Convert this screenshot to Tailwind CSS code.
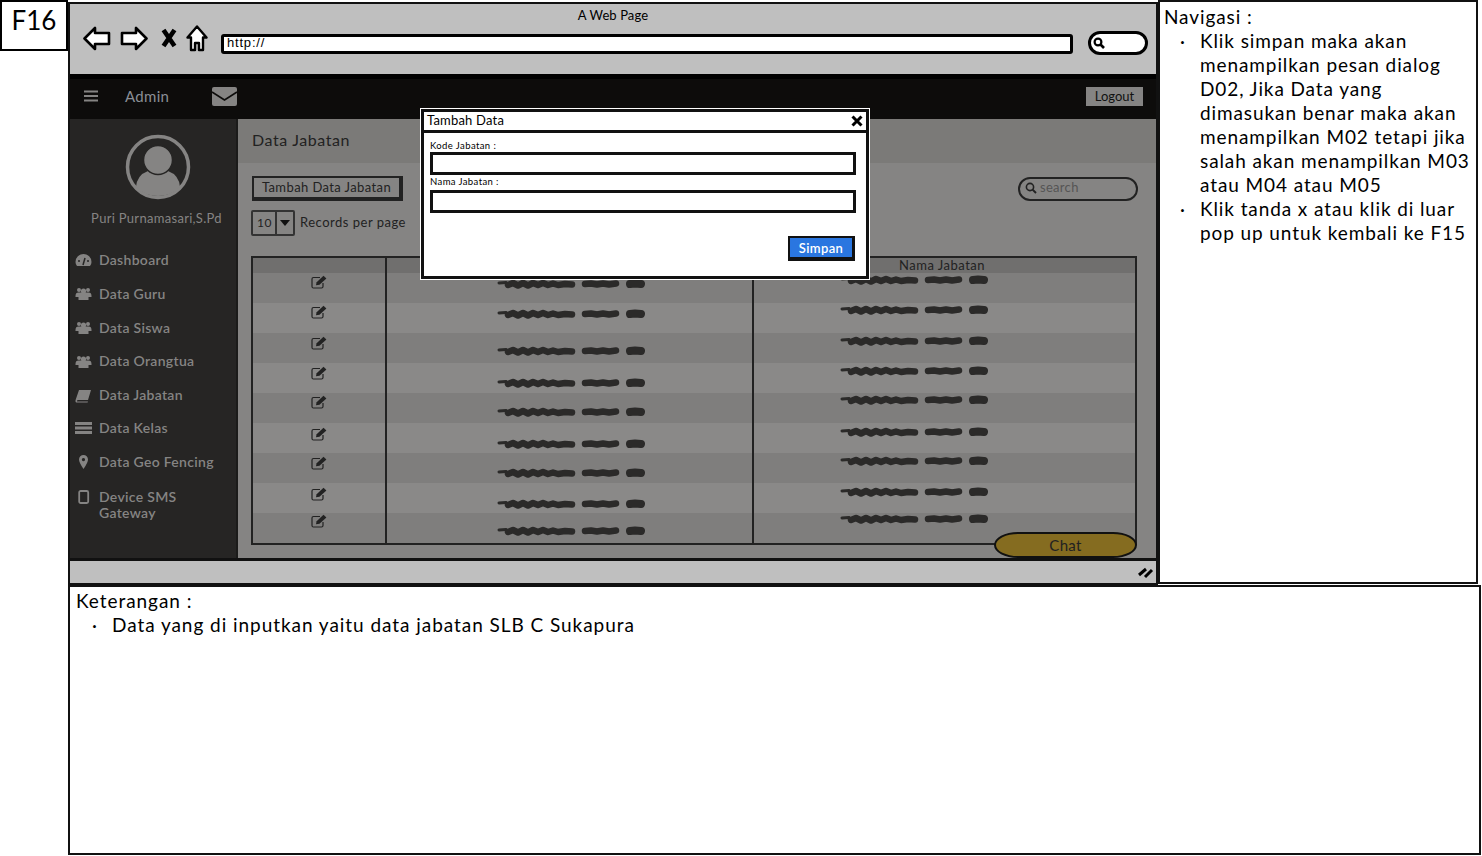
<!DOCTYPE html>
<html lang="en">
<head>
    <meta charset="UTF-8">
    <title>F16 Tambah Data Jabatan</title>
    <script src="https://cdn.jsdelivr.net/npm/@tailwindcss/browser@4"></script>
</head>
<body class="bg-white overflow-hidden font-['Lato',sans-serif] text-black">
<svg class="hidden">
    <symbol id="scribble" viewBox="0 0 148 12">
        <g fill="none" stroke="#2b2a29" stroke-linecap="round" stroke-linejoin="round">
            <path d="M2 5 L9 4.5" stroke-width="3"/>
            <path d="M11 7 L16 5 L21 7.5 L26 5 L31 7.5 L36 5 L41 7 L46 5 L51 7 L56 5.5 L61 7 L68 6 L75 6.5" stroke-width="6.5"/>
            <path d="M88 6 L94 5.5 L100 6.5 L106 5.5 L112 6.5 L119 5.5" stroke-width="6.5"/>
            <path d="M133 6 L138 5.5 L144 6" stroke-width="8"/>
        </g>
    </symbol>
    <symbol id="edit" viewBox="0 0 16 14">
        <path d="M12 8 V11.5 Q12 13 10.5 13 H2.5 Q1 13 1 11.5 V4 Q1 2.5 2.5 2.5 H9" fill="none" stroke="#222" stroke-width="1.2"/>
        <path d="M5 10.2 L5.6 7.2 L12.5 .8 L15.4 3.4 L8.5 9.8 Z" fill="#222"/>
    </symbol>
    <symbol id="users" viewBox="0 0 16 14">
        <circle cx="3.5" cy="3" r="2"/><circle cx="12.5" cy="3" r="2"/><circle cx="8" cy="4" r="2.6"/>
        <path d="M0 9 Q0 5.6 3 5.6 H13 Q16 5.6 16 9 V10 H13 V13 H3 V10 H0 Z"/>
    </symbol>
</svg>

<div class="w-[1482px] h-[856px] flex flex-col">
    <div class="flex h-[585px] shrink-0">
        <!-- screen id -->
        <div class="w-[68px] h-[51px] shrink-0 border-2 border-black bg-white text-[26px] leading-[36px] text-center">F16</div>

        <!-- browser window -->
        <div class="relative w-[1090px] h-[583px] mt-[2px] shrink-0 border-2 border-[#111] flex flex-col">
            <div class="relative h-[70px] shrink-0 bg-[#bfbfbf] flex items-start pl-[13px]">
                <div class="absolute top-[2px] left-0 right-0 text-center text-[13px] leading-[18px] tracking-[0.1px]">A Web Page</div>
                <svg class="w-[28px] h-[25px] mt-[22px]" viewBox="0 0 28 25"><path d="M1.5 12.5 L12 2 V7 H26 V18 H12 V23 Z" fill="#fff" stroke="#000" stroke-width="2.6" stroke-linejoin="round"/></svg>
                <svg class="w-[28px] h-[25px] mt-[22px] ml-[9px]" viewBox="0 0 28 25"><path d="M26.5 12.5 L16 2 V7 H2 V18 H16 V23 Z" fill="#fff" stroke="#000" stroke-width="2.6" stroke-linejoin="round"/></svg>
                <svg class="w-[16px] h-[20px] mt-[24px] ml-[13px]" viewBox="0 0 16 20"><path d="M2.5 2 L13.5 18 M13.5 2 L2.5 18" fill="none" stroke="#000" stroke-width="4.6"/></svg>
                <svg class="w-[22px] h-[27px] mt-[21px] ml-[9px]" viewBox="0 0 22 27"><path d="M11 1.5 L20.5 12.5 H17 V25 H13 V18 H9 V25 H5 V12.5 H1.5 Z" fill="#fff" stroke="#000" stroke-width="2.4" stroke-linejoin="round"/></svg>
                <div class="w-[852px] h-[20px] mt-[30px] ml-[13px] border-[3px] border-black rounded-[3px] bg-white text-[13px] leading-[12px] pl-[3px] tracking-[0.8px] font-['Liberation_Sans',sans-serif]">http://</div>
                <div class="w-[60px] h-[24px] mt-[27px] ml-[15px] border-[3px] border-black rounded-[12px] bg-white flex items-center pl-[2px]">
                    <svg class="w-[12px] h-[12px]" viewBox="0 0 12 12"><circle cx="5" cy="5" r="3.4" fill="none" stroke="#000" stroke-width="2.2"/><path d="M7.5 7.5 L11 11" stroke="#000" stroke-width="2.6"/></svg>
                </div>
            </div>

            <!-- app header -->
            <div class="h-[45px] shrink-0 bg-[#0d0c0b] border-t-[5px] border-black flex items-center pl-[14px] pr-[13px] pb-[6px]">
                <svg class="w-[14px] h-[12px]" viewBox="0 0 14 12"><path d="M0 1.5 H14 M0 6 H14 M0 10.5 H14" stroke="#858483" stroke-width="2"/></svg>
                <span class="ml-[27px] text-[15px] tracking-[0.3px] text-[#8a8f96]">Admin</span>
                <svg class="w-[25px] h-[19px] ml-[43px]" viewBox="0 0 25 19"><rect width="25" height="19" rx="2" fill="#858483"/><path d="M0 5 L12.5 13 L25 5" fill="none" stroke="#0d0c0b" stroke-width="1.6"/></svg>
                <div class="ml-auto w-[57px] h-[19px] bg-[#858483] text-[#111] text-[13px] leading-[19px] text-center">Logout</div>
            </div>

            <div class="flex flex-1 min-h-0">
                <!-- sidebar -->
                <div class="w-[168px] shrink-0 bg-[#262524] border-r-2 border-[#1b1b1a] text-[#858483] text-[14px] font-semibold tracking-[0.3px]">
                    <svg class="w-[66px] h-[66px] ml-[55px] mt-[15px]" viewBox="0 0 66 66">
                        <circle cx="33" cy="33" r="30.5" fill="none" stroke="#858483" stroke-width="3.5"/>
                        <path d="M11 53 Q12 41 23 37 H43 Q54 41 55 53 Q46 62 33 62 Q20 62 11 53 Z" fill="#858483"/>
                        <circle cx="33" cy="26" r="14.5" fill="#858483" stroke="#262524" stroke-width="1.5"/>
                    </svg>
                    <div class="mt-[9px] pl-[7px] text-center text-[13px] font-normal leading-[18px] tracking-[0.3px]">Puri Purnamasari,S.Pd</div>
                    <ul class="mt-[23px] ml-[5px] flex flex-col gap-[13px] leading-[20.8px]">
                        <li class="flex items-center gap-[7px]">
                            <svg class="w-[17px] h-[14px] fill-[#858483]" viewBox="0 0 17 14"><path d="M8.5 1 A8 8 0 0 0 .5 9 Q.5 11.5 2 13 H15 Q16.5 11.5 16.5 9 A8 8 0 0 0 8.5 1 Z"/><path d="M8 12 L10 5" stroke="#262524" stroke-width="1.5"/><circle cx="4" cy="8" r="1" fill="#262524"/><circle cx="13" cy="8" r="1" fill="#262524"/></svg>
                            Dashboard
                        </li>
                        <li class="flex items-center gap-[7px]"><svg class="w-[17px] h-[14px] fill-[#858483]"><use href="#users"/></svg>Data Guru</li>
                        <li class="flex items-center gap-[7px]"><svg class="w-[17px] h-[14px] fill-[#858483]"><use href="#users"/></svg>Data Siswa</li>
                        <li class="flex items-center gap-[7px]"><svg class="w-[17px] h-[14px] fill-[#858483]"><use href="#users"/></svg>Data Orangtua</li>
                        <li class="flex items-center gap-[7px]">
                            <svg class="w-[17px] h-[14px]" viewBox="0 0 17 14"><path d="M4 1 H16 L13 11 H3 Q1.5 11 2 12.5 H13 L12.6 13.6 H2 Q0 13.5 .6 11 Z" fill="#858483"/></svg>
                            Data Jabatan
                        </li>
                        <li class="flex items-center gap-[7px] -mt-[1px]">
                            <svg class="w-[17px] h-[14px]" viewBox="0 0 17 14"><path d="M0 1 H17 V4 H0 Z M0 5.5 H17 V8.5 H0 Z M0 10 H17 V13 H0 Z" fill="#858483"/></svg>
                            Data Kelas
                        </li>
                        <li class="flex items-center gap-[7px]">
                            <svg class="w-[17px] h-[14px]" viewBox="0 0 17 14"><path fill-rule="evenodd" d="M8.5 0 A4.5 4.5 0 0 0 4 4.5 Q4 7.5 8.5 14 Q13 7.5 13 4.5 A4.5 4.5 0 0 0 8.5 0 Z M8.5 3 A1.6 1.6 0 1 1 8.4 3 Z" fill="#858483"/></svg>
                            Data Geo Fencing
                        </li>
                        <li class="flex items-start gap-[7px] leading-[16px] mt-[3px]">
                            <svg class="w-[17px] h-[14px] mt-[1px]" viewBox="0 0 17 14"><rect x="4.2" y="1" width="9" height="12" rx="1.5" fill="none" stroke="#858483" stroke-width="1.8"/></svg>
                            <span>Device SMS<br>Gateway</span>
                        </li>
                    </ul>
                </div>

                <!-- content -->
                <div class="flex-1 min-w-0 bg-[#858483] flex flex-col">
                    <div class="h-[44px] shrink-0 bg-[#7b7a78] pl-[14px] pt-[10px] text-[16px] leading-[22px] tracking-[0.6px] text-[#222]">Data Jabatan</div>
                    <div class="flex items-center pl-[14px] pr-[18px] pt-[13px]">
                        <div class="w-[151px] h-[25px] border-2 border-[#222] border-r-[4px] border-b-[4px] bg-[#858483] text-[13px] leading-[19px] text-center tracking-[0.4px] text-[#222]">Tambah Data Jabatan</div>
                        <div class="ml-auto w-[120px] h-[24px] border-2 border-[#222] rounded-[12px] flex items-center gap-[3px] pl-[5px] pb-[1px] text-[13px] tracking-[0.3px] text-[#555]">
                            <svg class="w-[12px] h-[12px]" viewBox="0 0 12 12"><circle cx="5" cy="5" r="3.6" fill="none" stroke="#222" stroke-width="1.6"/><path d="M7.6 7.6 L11 11" stroke="#222" stroke-width="2"/></svg>
                            search
                        </div>
                    </div>
                    <div class="flex items-center pl-[13px] mt-[9px] text-[13px] tracking-[0.5px] text-[#222]">
                        <div class="flex h-[26px] border-2 border-[#333] rounded-[2px]">
                            <span class="w-[24px] pl-[4px] leading-[22px] border-r-2 border-[#333] text-[12px]">10</span>
                            <span class="w-[16px] flex items-center justify-center"><svg class="w-[10px] h-[6px]" viewBox="0 0 10 6"><path d="M0 0 H10 L5 6 Z" fill="#111"/></svg></span>
                        </div>
                        <span class="ml-[5px]">Records per page</span>
                    </div>

                    <!-- table: three columns over the row stripes -->
                    <div class="relative ml-[13px] mt-[20px] w-[886px] h-[289px] border-2 border-[#222] flex bg-[repeating-linear-gradient(#7f7e7d_0,#7f7e7d_30px,#8a8988_30px,#8a8988_60px)] bg-[position:0_15px]">
                        <div class="absolute top-0 left-0 right-0 h-[15px] bg-[#706f6e]"></div>
                        <div class="relative w-[134px] shrink-0 border-r-2 border-[#222] flex flex-col items-center pt-[17px] pr-[1px]">
                            <svg class="w-[16px] h-[14px] shrink-0"><use href="#edit"/></svg>
                            <svg class="w-[16px] h-[14px] shrink-0 mt-[16px]"><use href="#edit"/></svg>
                            <svg class="w-[16px] h-[14px] shrink-0 mt-[17px]"><use href="#edit"/></svg>
                            <svg class="w-[16px] h-[14px] shrink-0 mt-[16px]"><use href="#edit"/></svg>
                            <svg class="w-[16px] h-[14px] shrink-0 mt-[15px]"><use href="#edit"/></svg>
                            <svg class="w-[16px] h-[14px] shrink-0 mt-[18px]"><use href="#edit"/></svg>
                            <svg class="w-[16px] h-[14px] shrink-0 mt-[15px]"><use href="#edit"/></svg>
                            <svg class="w-[16px] h-[14px] shrink-0 mt-[17px]"><use href="#edit"/></svg>
                            <svg class="w-[16px] h-[14px] shrink-0 mt-[13px]"><use href="#edit"/></svg>
                        </div>
                        <div class="relative w-[367px] shrink-0 border-r-2 border-[#222] flex flex-col pl-[110px] pt-[20px]">
                            <svg class="w-[148px] h-[12px] shrink-0"><use href="#scribble"/></svg>
                            <svg class="w-[148px] h-[12px] shrink-0 mt-[18px]"><use href="#scribble"/></svg>
                            <svg class="w-[148px] h-[12px] shrink-0 mt-[25px]"><use href="#scribble"/></svg>
                            <svg class="w-[148px] h-[12px] shrink-0 mt-[20px]"><use href="#scribble"/></svg>
                            <svg class="w-[148px] h-[12px] shrink-0 mt-[17px]"><use href="#scribble"/></svg>
                            <svg class="w-[148px] h-[12px] shrink-0 mt-[20px]"><use href="#scribble"/></svg>
                            <svg class="w-[148px] h-[12px] shrink-0 mt-[17px]"><use href="#scribble"/></svg>
                            <svg class="w-[148px] h-[12px] shrink-0 mt-[19px]"><use href="#scribble"/></svg>
                            <svg class="w-[148px] h-[12px] shrink-0 mt-[15px]"><use href="#scribble"/></svg>
                        </div>
                        <div class="relative flex-1 flex flex-col pl-[86px] pt-[16px]">
                            <div class="absolute top-0 left-[145px] text-[13px] leading-[15px] tracking-[0.5px] text-[#222]">Nama Jabatan</div>
                            <svg class="w-[148px] h-[12px] shrink-0"><use href="#scribble"/></svg>
                            <svg class="w-[148px] h-[12px] shrink-0 mt-[18px]"><use href="#scribble"/></svg>
                            <svg class="w-[148px] h-[12px] shrink-0 mt-[19px]"><use href="#scribble"/></svg>
                            <svg class="w-[148px] h-[12px] shrink-0 mt-[18px]"><use href="#scribble"/></svg>
                            <svg class="w-[148px] h-[12px] shrink-0 mt-[17px]"><use href="#scribble"/></svg>
                            <svg class="w-[148px] h-[12px] shrink-0 mt-[20px]"><use href="#scribble"/></svg>
                            <svg class="w-[148px] h-[12px] shrink-0 mt-[17px]"><use href="#scribble"/></svg>
                            <svg class="w-[148px] h-[12px] shrink-0 mt-[19px]"><use href="#scribble"/></svg>
                            <svg class="w-[148px] h-[12px] shrink-0 mt-[15px]"><use href="#scribble"/></svg>
                        </div>
                    </div>
                </div>
            </div>

            <!-- status bar -->
            <div class="h-[25px] shrink-0 bg-[#bfbfbf] border-t-[3px] border-[#111] flex items-center justify-end pr-[2px]">
                <svg class="w-[16px] h-[13px]" viewBox="0 0 16 13"><path d="M1 9 L8 3 M7 11 L14 4" stroke="#000" stroke-width="3"/></svg>
            </div>

            <!-- modal -->
            <div class="absolute left-[351px] top-[105px] w-[448px] h-[170px] bg-white border-[3px] border-[#111] shadow-[0_0_0_1px_#fff]">
                <div class="h-[21px] border-b-[3px] border-[#111] flex items-center justify-between pl-[3px] pr-[3px] text-[13px] tracking-[0.2px]">
                    Tambah Data
                    <svg class="w-[12px] h-[12px]" viewBox="0 0 12 12"><path d="M1.5 1.5 L10.5 10.5 M10.5 1.5 L1.5 10.5" stroke="#000" stroke-width="3"/></svg>
                </div>
                <div class="px-[6px] pt-[7px] text-[9.5px] leading-[12px] tracking-[0.4px]">
                    <div>Kode Jabatan :</div>
                    <div class="w-[426px] h-[23px] border-[3px] border-[#111] bg-white"></div>
                    <div class="mt-[1px]">Nama Jabatan :</div>
                    <div class="w-[426px] h-[23px] mt-[2px] border-[3px] border-[#111] bg-white"></div>
                    <div class="flex justify-end pr-[5px] mt-[23px]">
                        <div class="w-[67px] h-[25px] bg-[#2a76e0] border-2 border-[#111] border-r-[3px] border-b-[4px] text-white text-[13px] font-semibold leading-[20px] text-center">Simpan</div>
                    </div>
                </div>
            </div>

            <!-- chat pill -->
            <div class="absolute left-[924px] top-[528px] w-[143px] h-[26px] bg-[#856c20] border-2 border-[#111] rounded-[24px/13px] text-[15px] leading-[22px] text-center tracking-[0.3px] text-[#222]">Chat</div>
        </div>

        <!-- navigation notes -->
        <div class="flex-1 min-w-0 mr-[4px] h-[584px] border-2 border-[#111] pl-[4px] pt-[3px] text-[19px] leading-[24px] tracking-[0.9px] bg-white whitespace-nowrap">
            <div>Navigasi :</div>
            <ul class="pl-[36px] list-none">
                <li class="relative">
                    <span class="absolute -left-[20px]">·</span>
                    Klik simpan maka akan<br>menampilkan pesan dialog<br>D02, Jika Data yang<br>dimasukan benar maka akan<br>menampilkan M02 tetapi jika<br>salah akan menampilkan M03<br>atau M04 atau M05
                </li>
                <li class="relative">
                    <span class="absolute -left-[20px]">·</span>
                    Klik tanda x atau klik di luar<br>pop up untuk kembali ke F15
                </li>
            </ul>
        </div>
    </div>

    <!-- description -->
    <div class="ml-[68px] mr-[1px] h-[270px] border-2 border-[#111] pl-[6px] pt-[2px] text-[19px] leading-[24px] tracking-[0.95px]">
        <div>Keterangan :</div>
        <div class="flex pl-[16px]"><span class="w-[20px]">·</span>Data yang di inputkan yaitu data jabatan SLB C Sukapura</div>
    </div>
</div>
</body>
</html>
